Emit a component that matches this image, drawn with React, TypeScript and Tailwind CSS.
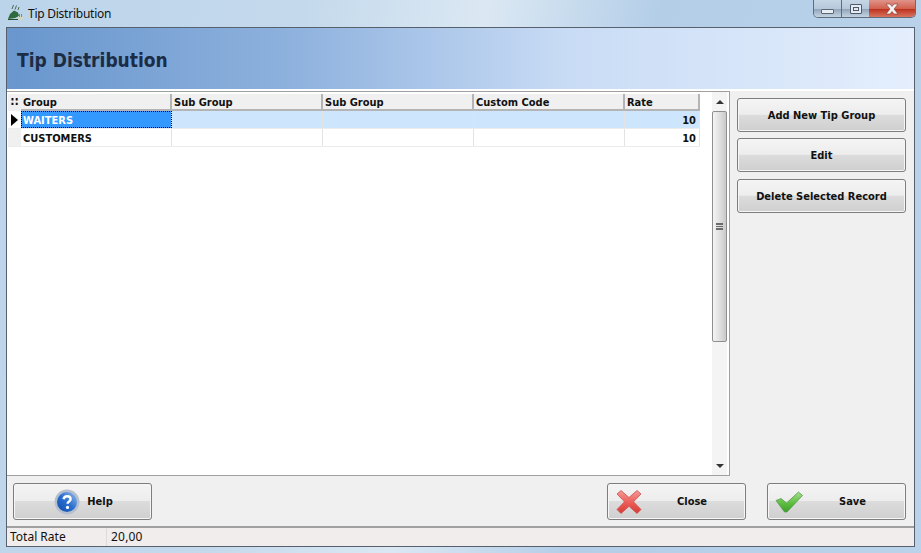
const font = { fontFamily: '"DejaVu Sans Condensed", "DejaVu Sans", sans-serif' };

const btn =
  "flex items-center justify-center rounded-[3px] border border-[#7d7d7d] bg-[linear-gradient(to_bottom,#f4f4f4_0%,#ededed_48%,#dcdcdc_50%,#cfcfcf_100%)] text-[11px] font-bold text-[#111] font-stretch-condensed shadow-[inset_0_0_0_1px_#f6f6f6]";

function SideButton({ label }: { label: string }) {
  return <div className={`${btn} h-[34px] w-[169px] pt-[2px]`}>{label}</div>;
}

function HelpIcon() {
  return (
    <svg width="26" height="26" viewBox="0 0 26 26">
      <defs>
        <linearGradient id="hb" x1="0" y1="1" x2="1" y2="0">
          <stop offset="0" stopColor="#0f4aa8" />
          <stop offset="0.5" stopColor="#2a6fd0" />
          <stop offset="1" stopColor="#9dbde8" />
        </linearGradient>
      </defs>
      <circle cx="13" cy="13" r="12.5" fill="#b4bfd0" />
      <circle cx="13" cy="13" r="10" fill="url(#hb)" />
      <path d="M9.6 10.2c.3-2 1.7-3 3.6-3 2 0 3.4 1.1 3.4 2.8 0 1.4-.8 2.1-1.8 2.8-.9.6-1.2 1-1.2 2" fill="none" stroke="#fff" strokeWidth="2.4" />
      <circle cx="13.5" cy="18.4" r="1.6" fill="#fff" />
    </svg>
  );
}

function CloseIcon() {
  return (
    <svg width="26" height="26" viewBox="0 0 26 26">
      <defs>
        <linearGradient id="xr" x1="0" y1="0" x2="0" y2="1">
          <stop offset="0" stopColor="#f59a96" />
          <stop offset="0.55" stopColor="#ec5a55" />
          <stop offset="1" stopColor="#d63a36" />
        </linearGradient>
      </defs>
      <path d="M5 1.5 13 8.5 21 1.5 25 5 17.5 12.8 25 20.5 21 24.5 13 17.3 5 24.5 1 20.5 8.5 12.8 1 5Z" fill="url(#xr)" stroke="#c9524e" strokeWidth="0.8" strokeLinejoin="round" />
    </svg>
  );
}

function SaveIcon() {
  return (
    <svg width="28" height="22" viewBox="0 0 28 22">
      <defs>
        <linearGradient id="ck" x1="0" y1="0" x2="0" y2="1">
          <stop offset="0" stopColor="#a5dc8c" />
          <stop offset="0.55" stopColor="#5fbf42" />
          <stop offset="1" stopColor="#3c9f2a" />
        </linearGradient>
      </defs>
      <path d="M1 9.5 6 7.5 11.5 12 23.5 1 27.5 4.5 12 21 9.5 21Z" fill="url(#ck)" stroke="#5b9a55" strokeWidth="0.8" strokeLinejoin="round" />
    </svg>
  );
}

function AppIcon() {
  return (
    <svg width="17" height="17" viewBox="0 0 17 17">
      <path d="M1 15 3 10 7 6.5 11 8.5 12 12 8 14Z" fill="#2f6b3c" />
      <path d="M5 5 6.5 1M8 5.5 9.5 1.5M11 6 12 3" stroke="#4d6b52" strokeWidth="1" fill="none" />
      <path d="M1 15H11V16H1Z" fill="#26502f" />
      <path d="M11 12H16V16H11Z" fill="#cfd6c8" />
      <path d="M12 10H13V13H12ZM14 10H15V13H14Z" fill="#7f8b7c" />
    </svg>
  );
}

const cols = [
  { label: "Group", w: "w-[151px]" },
  { label: "Sub Group", w: "w-[151px]" },
  { label: "Sub Group", w: "w-[151px]" },
  { label: "Custom Code", w: "w-[151px]" },
  { label: "Rate", w: "w-[75px]" },
];

function Row({ name, selected }: { name: string; selected: boolean }) {
  const bg = selected ? "bg-[#cde6fd]" : "bg-white";
  const cell = `h-full border-r border-[#e3e3e3] ${bg}`;
  return (
    <div className="flex h-[18px] w-fit border-b border-[#ececec] text-[11px] font-bold font-stretch-condensed text-[#111]">
      <div className={`flex h-full w-[13px] items-center pl-[3px] ${selected ? "bg-white" : "bg-[#f0f0f0]"}`}>
        {selected && <div className="h-0 w-0 border-y-[6px] border-l-[7px] border-y-transparent border-l-black" />}
      </div>
      <div className={`flex w-[151px] items-center border-r border-[#e3e3e3] pl-[2px] pt-[4px] ${selected ? "bg-[#3399ff] text-white outline-1 outline-dotted outline-offset-[-1px] outline-black" : "bg-white"}`}>
        {name}
      </div>
      <div className={`${cell} w-[151px]`} />
      <div className={`${cell} w-[151px]`} />
      <div className={`${cell} w-[151px]`} />
      <div className={`${cell} flex w-[75px] items-center justify-end pr-[3px] pt-[4px]`}>10</div>
    </div>
  );
}

export default function App() {
  return (
    <div
      style={font}
      className="flex h-[553px] w-[921px] flex-col overflow-hidden bg-[linear-gradient(100deg,#bcd4ea_0%,#c4d9ec_30%,#dbe8f3_48%,#b4cee8_65%,#bad3ea_100%)]"
    >
      <div className="flex h-[27px] shrink-0 items-start">
        <div className="ml-[7px] mt-[4px]"><AppIcon /></div>
        <div className="ml-[4px] mt-[6px] text-[12px] leading-4 tracking-[-0.25px] text-[#111]" style={{ fontFamily: '"Noto Sans", sans-serif' }}>
          Tip Distribution
        </div>
        <div className="ml-auto mr-[5px] flex h-[18px] w-[103px] overflow-hidden rounded-b-[5px] border border-t-0 border-[#5f6c7c]">
          <div className="flex w-[28px] items-end justify-center border-r border-[#5f6c7c] bg-[linear-gradient(to_bottom,#c6d6e6_0%,#b6c8da_50%,#93a6b9_55%,#c3d3e2_100%)] pb-[3px]">
            <div className="h-[5px] w-[13px] rounded-[1px] border border-[#5a6777] bg-[#e9eef3]" />
          </div>
          <div className="flex w-[27px] items-center justify-center bg-[linear-gradient(to_bottom,#c6d6e6_0%,#b6c8da_50%,#93a6b9_55%,#c3d3e2_100%)]">
            <div className="flex h-[10px] w-[12px] items-center justify-center rounded-[1px] border border-[#4e5a69] bg-[#e4ebf2]">
              <div className="h-[4px] w-[6px] border border-[#4e5a69]" />
            </div>
          </div>
          <div className="flex flex-1 items-center justify-center bg-[linear-gradient(to_bottom,#e0948a_0%,#d2604f_50%,#bc3420_55%,#d9735f_100%)]">
            <svg width="14" height="12" viewBox="0 0 14 12">
              <path d="M1 1H5L7 3.5 9 1H13L9 6 13 11H9L7 8.5 5 11H1L5 6Z" fill="#f3f3f3" stroke="#7d3b30" strokeWidth="0.6" />
            </svg>
          </div>
        </div>
      </div>

      <div className="mx-[6px] mb-[6px] flex min-h-0 flex-1 flex-col border border-[#56616d] bg-[#f0f0f0]">
        <div className="flex h-[61px] shrink-0 items-center bg-[linear-gradient(to_right,#6896cd_0%,#8fb2de_32%,#c9dcf5_62%,#e4eefd_100%)] pl-[10px] pt-[3px] text-[19px] font-bold font-stretch-condensed text-[#1c2c44]">
          Tip Distribution
        </div>
        <div className="h-[2px] shrink-0 bg-white" />

        <div className="flex min-h-0 flex-1">
          <div className="flex w-[723px] shrink-0 border-t border-r border-b border-[#a0a0a0] bg-white">
            <div className="min-w-0 flex-1 pl-px pt-[2px]">
              <div className="flex h-[17px] text-[11px] font-bold font-stretch-condensed text-[#111]">
                <div className="flex w-[13px] items-center justify-center bg-[#f0f0f0] pb-[3px] text-[12px] leading-none">::</div>
                {cols.map((c, i) => (
                  <div key={i} className={`flex items-center border-r-2 border-b-2 border-[#b4b4b4] bg-[#f0f0f0] pl-[2px] pt-[3px] ${c.w}`}>
                    {c.label}
                  </div>
                ))}
              </div>
              <Row name="WAITERS" selected />
              <Row name="CUSTOMERS" selected={false} />
            </div>
            <div className="mr-[2px] flex w-[15px] shrink-0 flex-col bg-[#f4f4f4]">
              <div className="flex h-[19px] items-center justify-center">
                <div className="h-0 w-0 border-x-[4px] border-b-[4px] border-x-transparent border-b-[#333]" />
              </div>
              <div className="flex h-[231px] items-center justify-center rounded-[2px] border border-[#8f8f8f] bg-[linear-gradient(to_right,#f4f4f4,#dcdcdc_60%,#c9c9c9)]">
                <div className="h-[7px] w-[7px] border-y-2 border-[#6b6b6b] bg-[linear-gradient(to_bottom,transparent_40%,#6b6b6b_40%,#6b6b6b_60%,transparent_60%)]" />
              </div>
              <div className="flex-1" />
              <div className="flex h-[18px] items-center justify-center">
                <div className="h-0 w-0 border-x-[4px] border-t-[4px] border-x-transparent border-t-[#333]" />
              </div>
            </div>
          </div>
          <div className="flex flex-1 flex-col gap-[6px] pl-[7px] pt-[7px]">
            <SideButton label="Add New Tip Group" />
            <SideButton label="Edit" />
            <div className="mt-px"><SideButton label="Delete Selected Record" /></div>
          </div>
        </div>

        <div className="flex h-[52px] shrink-0 items-start border-b-2 border-[#a0a0a0] pt-[7px] pl-[6px] pr-[8px]">
          <div className={`${btn} h-[37px] w-[139px] gap-[7px] pl-[2px]`}>
            <HelpIcon />
            <span className="pt-[2px]">Help</span>
          </div>
          <div className={`${btn} ml-auto h-[37px] w-[139px] justify-start pl-[8px]`}>
            <CloseIcon />
            <span className="ml-[35px] pt-[2px]">Close</span>
          </div>
          <div className={`${btn} ml-[21px] h-[37px] w-[139px] justify-start pl-[7px]`}>
            <SaveIcon />
            <span className="ml-[36px] pt-[2px]">Save</span>
          </div>
        </div>

        <div className="flex h-[18px] shrink-0 items-center bg-[#f1eded] text-[12px] text-[#111]" style={{ fontFamily: '"Noto Sans", sans-serif' }}>
          <div className="h-full w-[100px] border-r border-[#dcdcdc] pl-[3px] leading-[18px]">Total Rate</div>
          <div className="pl-[4px] tracking-[0.2px]">20,00</div>
        </div>
      </div>
    </div>
  );
}
